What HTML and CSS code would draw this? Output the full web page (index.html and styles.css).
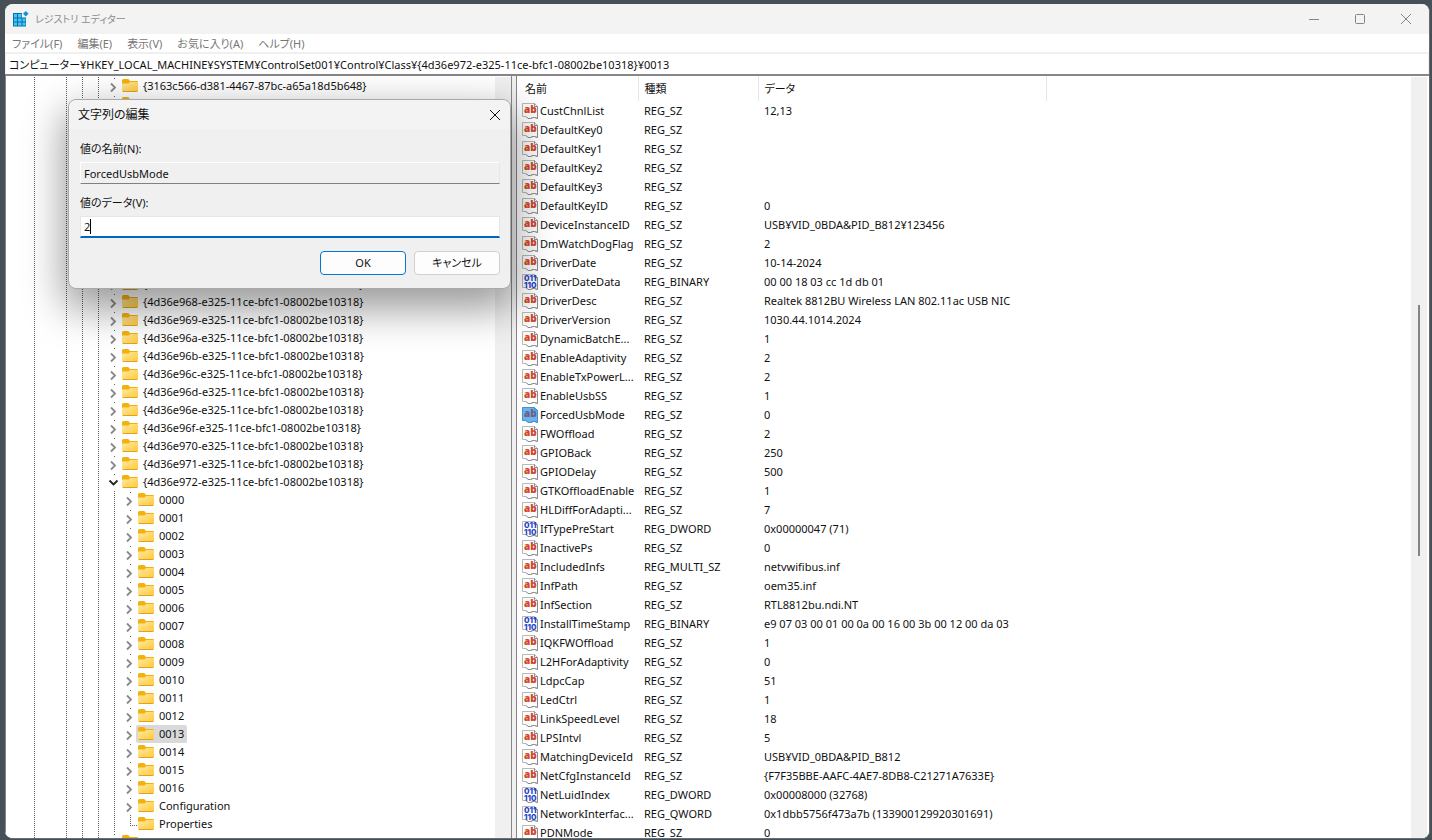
FILE: index.html
```html
<!DOCTYPE html>
<html lang="ja">
<head>
  <meta charset="UTF-8" />
  <meta name="viewport" content="width=device-width, initial-scale=1.0" />
  <title>レジストリ エディター</title>
  <link rel="stylesheet" href="styles.css">
</head>
<body>
  <svg class="defs" aria-hidden="true">
    <defs>
      <linearGradient id="folder-fill" x1="0" y1="0" x2="1" y2="1">
        <stop offset="0" stop-color="#ffe9a2" />
        <stop offset="1" stop-color="#ffc937" />
      </linearGradient>
    </defs>
    <symbol id="folder" viewBox="0 0 16 16">
      <path d="M0 2.5Q0 1 1.5 1H6.2L8 3H15Q16 3 16 4V8H0Z" fill="#f3b10d" />
      <path d="M0 5.5H6.5L8 4H16V13.2Q16 14 15 14H1Q0 14 0 13.2Z" fill="url(#folder-fill)" />
      <path d="M1 13.5H15" stroke="#e4a01c" />
    </symbol>
    <symbol id="right" viewBox="0 0 16 18">
      <path d="M5 6.5L9 10.5L5 14.5" fill="none" stroke="#8a8a8a" stroke-width="1.8" />
    </symbol>
    <symbol id="down" viewBox="0 0 16 18">
      <path d="M3.500 7.5L7.500 11.5L11.500 7.5" fill="none" stroke="#222" stroke-width="1.8" />
    </symbol>
    <symbol id="page" viewBox="0 0 16 16">
      <path class="sheet" d="M.5 .5H12.5L15.5 3.5V15.5L12.5 14.5H11L8.5 15.5H6L4 13.5H.5Z" />
      <path class="sheet-edge" d="M12.5 .5V3.5H15.5V15.5L12.5 14.5H11L8.5 15.5H6L4 13.5" />
    </symbol>
  </svg>

  <div class="window">
    <header class="titlebar">
      <svg class="app-icon" viewBox="0 0 16 16">
        <path d="M0 2H13V15.500H0Z" fill="#0a6fae" />
        <path d="M1 3H4V6.500H1ZM5 3H8.500V6.500H5ZM1 7.500H4V10.500H1ZM5 7.500H8.500V10.500H5ZM9.500 7.500H12.500V10.500H9.500ZM1 11.500H4V14.500H1ZM5 11.500H8.500V14.500H5ZM9.500 11.500H12.500V14.500H9.500Z" fill="#42c6f5" />
        <path d="M9 1H14V6.500H9Z" fill="#f3f3f3" />
        <path d="M12.800 0L15.600 2.800L12.800 5.600L10 2.800Z" fill="#1592cf" />
      </svg>
      <h1>レジストリ エディター</h1>
      <button class="caption" aria-label="最小化"><svg viewBox="0 0 10 10"><path d="M0 5.5H10" /></svg></button>
      <button class="caption" aria-label="最大化"><svg viewBox="0 0 10 10"><rect x=".5" y=".5" width="9" height="9" rx="1" /></svg></button>
      <button class="caption" aria-label="閉じる"><svg viewBox="0 0 10 10"><path d="M0 0L10 10M10 0L0 10" /></svg></button>
    </header>
    <nav class="menu">
      <button>ファイル(F)</button>
      <button>編集(E)</button>
      <button>表示(V)</button>
      <button>お気に入り(A)</button>
      <button>ヘルプ(H)</button>
    </nav>
    <input class="address" type="text" aria-label="アドレス" value="コンピューター¥HKEY_LOCAL_MACHINE¥SYSTEM¥ControlSet001¥Control¥Class¥{4d36e972-e325-11ce-bfc1-08002be10318}¥0013">
    <main class="panes">
      <section class="tree-pane">
        <ul id="tree" class="tree"></ul>
        <div class="scrollbar"></div>
      </section>
      <section class="list-pane">
        <div class="list">
          <table>
            <thead>
              <tr>
                <th class="col-name">名前</th>
                <th class="col-type">種類</th>
                <th class="col-data">データ</th>
                <th></th>
              </tr>
            </thead>
            <tbody id="values"></tbody>
          </table>
        </div>
        <div class="scrollbar"><div class="thumb"></div></div>
      </section>
    </main>

    <form class="dialog" role="dialog" aria-labelledby="dialog-title">
      <div class="dialog-title">
        <h2 id="dialog-title">文字列の編集</h2>
        <button type="button" class="dialog-close" aria-label="閉じる"><svg viewBox="0 0 10 10"><path d="M0 0L10 10M10 0L0 10" /></svg></button>
      </div>
      <div class="dialog-body">
        <label for="value-name">値の名前(N):</label>
        <input id="value-name" class="readonly" type="text" value="ForcedUsbMode" readonly>
        <label for="value-data">値のデータ(V):</label>
        <div class="edit">
          <input id="value-data" type="text" value="2">
          <span class="caret"></span>
        </div>
        <div class="buttons">
          <button type="button" class="default">OK</button>
          <button type="button">キャンセル</button>
        </div>
      </div>
    </form>
  </div>

  <script>
    const classKeys = [
      "{3163c566-d381-4467-87bc-a65a18d5b648}",
      "{3163c566-d381-4467-87bc-a65a18d5b649}",
      "{36fc9e60-c465-11cf-8056-444553540000}",
      "{3e3f0674-c83c-4558-bb26-9820e1eba5c5}",
      "{43675d81-502a-4a82-9f84-b75f418c5dea}",
      "{45e8c9d9-1d1a-4d2b-8d6c-0d4d6a9d2c5e}",
      "{4658ee7e-f050-11d1-b6bd-00c04fa372a7}",
      "{48721b56-6795-11d2-b1a8-0080c72e74a2}",
      "{49ce6ac8-6f86-11d2-b1e5-0080c72e74a2}",
      "{4d36e965-e325-11ce-bfc1-08002be10318}",
      "{4d36e966-e325-11ce-bfc1-08002be10318}",
      "{4d36e967-e325-11ce-bfc1-08002be10318}",
      "{4d36e968-e325-11ce-bfc1-08002be10318}",
      "{4d36e969-e325-11ce-bfc1-08002be10318}",
      "{4d36e96a-e325-11ce-bfc1-08002be10318}",
      "{4d36e96b-e325-11ce-bfc1-08002be10318}",
      "{4d36e96c-e325-11ce-bfc1-08002be10318}",
      "{4d36e96d-e325-11ce-bfc1-08002be10318}",
      "{4d36e96e-e325-11ce-bfc1-08002be10318}",
      "{4d36e96f-e325-11ce-bfc1-08002be10318}",
      "{4d36e970-e325-11ce-bfc1-08002be10318}",
      "{4d36e971-e325-11ce-bfc1-08002be10318}"
    ];

    const values = [
      ["CustChnlList", "REG_SZ", "12,13"],
      ["DefaultKey0", "REG_SZ", ""],
      ["DefaultKey1", "REG_SZ", ""],
      ["DefaultKey2", "REG_SZ", ""],
      ["DefaultKey3", "REG_SZ", ""],
      ["DefaultKeyID", "REG_SZ", "0"],
      ["DeviceInstanceID", "REG_SZ", "USB¥VID_0BDA&PID_B812¥123456"],
      ["DmWatchDogFlag", "REG_SZ", "2"],
      ["DriverDate", "REG_SZ", "10-14-2024"],
      ["DriverDateData", "REG_BINARY", "00 00 18 03 cc 1d db 01"],
      ["DriverDesc", "REG_SZ", "Realtek 8812BU Wireless LAN 802.11ac USB NIC"],
      ["DriverVersion", "REG_SZ", "1030.44.1014.2024"],
      ["DynamicBatchE...", "REG_SZ", "1"],
      ["EnableAdaptivity", "REG_SZ", "2"],
      ["EnableTxPowerL...", "REG_SZ", "2"],
      ["EnableUsbSS", "REG_SZ", "1"],
      ["ForcedUsbMode", "REG_SZ", "0"],
      ["FWOffload", "REG_SZ", "2"],
      ["GPIOBack", "REG_SZ", "250"],
      ["GPIODelay", "REG_SZ", "500"],
      ["GTKOffloadEnable", "REG_SZ", "1"],
      ["HLDiffForAdapti...", "REG_SZ", "7"],
      ["IfTypePreStart", "REG_DWORD", "0x00000047 (71)"],
      ["InactivePs", "REG_SZ", "0"],
      ["IncludedInfs", "REG_MULTI_SZ", "netvwifibus.inf"],
      ["InfPath", "REG_SZ", "oem35.inf"],
      ["InfSection", "REG_SZ", "RTL8812bu.ndi.NT"],
      ["InstallTimeStamp", "REG_BINARY", "e9 07 03 00 01 00 0a 00 16 00 3b 00 12 00 da 03"],
      ["IQKFWOffload", "REG_SZ", "1"],
      ["L2HForAdaptivity", "REG_SZ", "0"],
      ["LdpcCap", "REG_SZ", "51"],
      ["LedCtrl", "REG_SZ", "1"],
      ["LinkSpeedLevel", "REG_SZ", "18"],
      ["LPSIntvl", "REG_SZ", "5"],
      ["MatchingDeviceId", "REG_SZ", "USB¥VID_0BDA&PID_B812"],
      ["NetCfgInstanceId", "REG_SZ", "{F7F35BBE-AAFC-4AE7-8DB8-C21271A7633E}"],
      ["NetLuidIndex", "REG_DWORD", "0x00008000 (32768)"],
      ["NetworkInterfac...", "REG_QWORD", "0x1dbb5756f473a7b (133900129920301691)"],
      ["PDNMode", "REG_SZ", "0"]
    ];

    const tree = document.getElementById("tree");
    const list = document.getElementById("values");

    function addKey(name, level, state) {
      const li = document.createElement("li");
      // the second column belongs to a last child, so it has no line
      let html = '<i class="line"></i><i></i><i class="line"></i><i class="line"></i><i class="line"></i>';
      if (level === 1) html += '<i class="line"></i>';
      if (state === "leaf") {
        html += '<i class="corner"></i>';
      } else {
        html += `<i class="toggle"><svg><use href="#${state === "open" ? "down" : "right"}"/></svg></i>`;
      }
      html += `<span class="key"><svg class="folder"><use href="#folder"/></svg>${name}</span>`;
      li.innerHTML = html;
      if (name === "0013") li.className = "selected";
      tree.appendChild(li);
    }

    classKeys.forEach(key => addKey(key, 0, "closed"));
    addKey("{4d36e972-e325-11ce-bfc1-08002be10318}", 0, "open");
    for (let i = 0; i <= 16; i++) {
      addKey(String(i).padStart(4, "0"), 1, "closed");
    }
    addKey("Configuration", 1, "closed");
    addKey("Properties", 1, "leaf");
    addKey("{4d36e973-e325-11ce-bfc1-08002be10318}", 0, "closed");

    function valueIcon(type) {
      const isText = type === "REG_SZ" || type === "REG_MULTI_SZ";
      const label = isText
        ? '<text class="ab" x="2" y="10">ab</text>'
        : '<text class="bits" x="2" y="7">011</text><text class="bits" x="2" y="14">110</text>';
      return `<svg class="value-icon" viewBox="0 0 16 16"><use href="#page"/>${label}</svg>`;
    }

    values.forEach(([name, type, data]) => {
      const row = document.createElement("tr");
      if (name === "ForcedUsbMode") row.className = "current";
      row.innerHTML = `<td><div class="name">${valueIcon(type)}<span>${name}</span></div></td><td>${type}</td><td></td><td></td>`;
      row.cells[2].textContent = data;
      list.appendChild(row);
    });
  </script>
</body>
</html>
```
FILE: styles.css
```css
* {
  box-sizing: border-box;
}
body {
  margin: 0;
  height: 100vh;
  padding: 4px 2px 1px 5px;
  background-color: #465056;
  color: #111;
  font-family: "Noto Sans", "Noto Sans CJK JP", sans-serif;
  font-size: 11px;
  line-height: 18px;
  font-feature-settings: "palt";
  overflow: hidden;
}
button, input {
  font: inherit;
  font-feature-settings: inherit;
  color: inherit;
  margin: 0;
}
h1, h2 {
  margin: 0;
  font-size: 11px;
  font-weight: normal;
}
.defs {
  position: absolute;
  width: 0;
  height: 0;
}
.window {
  position: relative;
  display: flex;
  flex-direction: column;
  height: 100%;
  background: #f0f0f0;
  border-right: 1px solid #666e74;
  border-bottom: 1px solid #666e74;
  border-radius: 8px;
  overflow: hidden;
}

/* title bar */
.titlebar {
  display: flex;
  align-items: center;
  flex: none;
  height: 30px;
  padding-left: 8px;
  background: #f3f3f3;
  color: #8c8c8c;
}
.titlebar h1 {
  flex: 1;
  margin-left: 6px;
  font-size: 10px;
}
.app-icon {
  width: 16px;
  height: 16px;
}
.caption {
  width: 46px;
  height: 30px;
  padding: 0;
  border: none;
  background: none;
}
.caption svg, .dialog-close svg {
  display: block;
  width: 10px;
  height: 10px;
  margin: auto;
  fill: none;
  stroke: #858585;
}

.menu {
  display: flex;
  flex: none;
  gap: 15px;
  height: 18px;
  padding-left: 7px;
  background: #fff;
  color: #777;
}
.menu button {
  padding: 1px 0 0;
  border: none;
  background: none;
}
.address {
  flex: none;
  height: 20px;
  margin: 2px 1px 0;
  padding: 0 3px;
  border: none;
  background: #fff;
}

.panes {
  display: flex;
  flex: 1;
  gap: 4px;
  min-height: 0;
  border-top: 2px solid #85858b;
}
.tree-pane, .list-pane {
  display: flex;
  background: #fff;
  overflow: hidden;
}
.tree-pane {
  flex: 0 0 507px;
  border-left: 1px solid #85858b;
  border-right: 1px solid #85858b;
}
.list-pane {
  flex: 1;
  min-width: 0;
  border-left: 1px solid #85858b;
  padding-right: 2px;
}
.scrollbar {
  flex: none;
  width: 16px;
  margin-top: 1px;
  background: #f0f0f0;
}
.thumb {
  width: 2px;
  height: 251px;
  margin: 228px auto 0;
  background: #858585;
}

/* key tree */
.tree {
  flex: 1;
  margin: 0;
  padding: 1px 0 0 20px;
  list-style: none;
}
.tree li {
  display: flex;
  height: 18px;
  white-space: nowrap;
}
.tree i {
  flex: none;
  width: 16px;
  height: 18px;
}
.line, .corner::before {
  background: repeating-linear-gradient(#606060 0 1px, transparent 1px 2px) 8px 0 / 1px 100% no-repeat;
}
.toggle {
  background: linear-gradient(#606060, #606060) 8px 1px / 1px 1px no-repeat;
}
.toggle svg {
  display: block;
  width: 16px;
  height: 18px;
}
.corner {
  background: repeating-linear-gradient(90deg, #606060 0 1px, transparent 1px 2px) 8px 10px / 8px 1px no-repeat;
}
.corner::before {
  content: "";
  display: block;
  width: 16px;
  height: 10px;
}
.key {
  display: flex;
  align-items: center;
  gap: 5px;
  padding-right: 3px;
  border-radius: 2px;
}
.selected .key {
  background: #d9d9d9;
  box-shadow: -2px 0 #d9d9d9;
}
.folder {
  width: 16px;
  height: 16px;
}

/* value list */
.list {
  flex: 1;
  min-width: 0;
  overflow: hidden;
}
table {
  width: 100%;
  table-layout: fixed;
  border-collapse: collapse;
}
th, td {
  padding: 0 0 0 6px;
  text-align: left;
  font-weight: normal;
  white-space: nowrap;
}
th {
  height: 25px;
  border-right: 1px solid #e5e5e5;
}
th:first-child {
  padding-left: 8px;
}
th:last-child {
  border: none;
}
.col-name {
  width: 121px;
}
.col-type {
  width: 120px;
}
.col-data {
  width: 288px;
}
td {
  height: 19px;
}
td:first-child {
  padding-left: 5px;
}
.name {
  display: flex;
  align-items: center;
  gap: 2px;
}
.value-icon {
  flex: none;
  width: 16px;
  height: 16px;
}
.sheet {
  fill: var(--sheet, #fcfcfc);
  stroke: var(--sheet-line, #b8b8b8);
}
.sheet-edge {
  fill: none;
  stroke: var(--sheet-line, #8b8b8b);
}
.ab, .bits {
  font-family: "Open Sans", sans-serif;
  font-weight: 800;
  font-size: 10px;
  fill: #d0472a;
}
.bits {
  font-family: Inter, sans-serif;
  font-size: 8px;
  fill: #2745c9;
}
.current {
  --sheet: #6db3ea;
  --sheet-line: #3f93d3;
}
.current .ab {
  fill: #6b5f86;
}

/* edit string dialog */
.dialog {
  position: absolute;
  left: 63px;
  top: 95px;
  width: 443px;
  border: 1px solid #a9a9a9;
  border-radius: 8px;
  background: #f0f0f0;
  box-shadow: 0 16px 40px 4px rgba(0, 0, 0, 0.4);
}
.dialog-title {
  display: flex;
  align-items: center;
  justify-content: space-between;
  height: 29px;
  padding: 0 10px 0 9px;
  border-radius: 8px 8px 0 0;
  background: #f3f3f3;
}
.dialog-title h2 {
  font-size: 12px;
}
.dialog-close {
  padding: 0;
  border: none;
  background: none;
}
.dialog-close svg {
  stroke: #111;
}
.dialog-body {
  display: flex;
  flex-direction: column;
  padding: 11px 10px 13px 11px;
}
.dialog label {
  height: 18px;
  margin-bottom: 4px;
}
.dialog input {
  display: block;
  width: 100%;
  height: 22px;
  padding: 0 3px;
  border: 1px solid #e6e6e6;
  border-bottom: 1px solid #808080;
  outline: none;
  background: #fff;
}
.dialog .readonly {
  margin-bottom: 10px;
  border-color: #fff #e6e6e6 #808080 #fff;
  background: #f0f0f0;
}
.edit {
  position: relative;
}
.dialog .edit input {
  border-bottom: 2px solid #0067c0;
}
.caret {
  position: absolute;
  left: 10px;
  top: 3px;
  width: 1px;
  height: 15px;
  background: #000;
}
.buttons {
  display: flex;
  justify-content: flex-end;
  gap: 8px;
  margin-top: 13px;
}
.buttons button {
  width: 86px;
  height: 24px;
  padding: 0;
  border: 1px solid #d0d0d0;
  border-radius: 4px;
  background: #fdfdfd;
}
.buttons .default {
  border-color: #0078d4;
}
```
